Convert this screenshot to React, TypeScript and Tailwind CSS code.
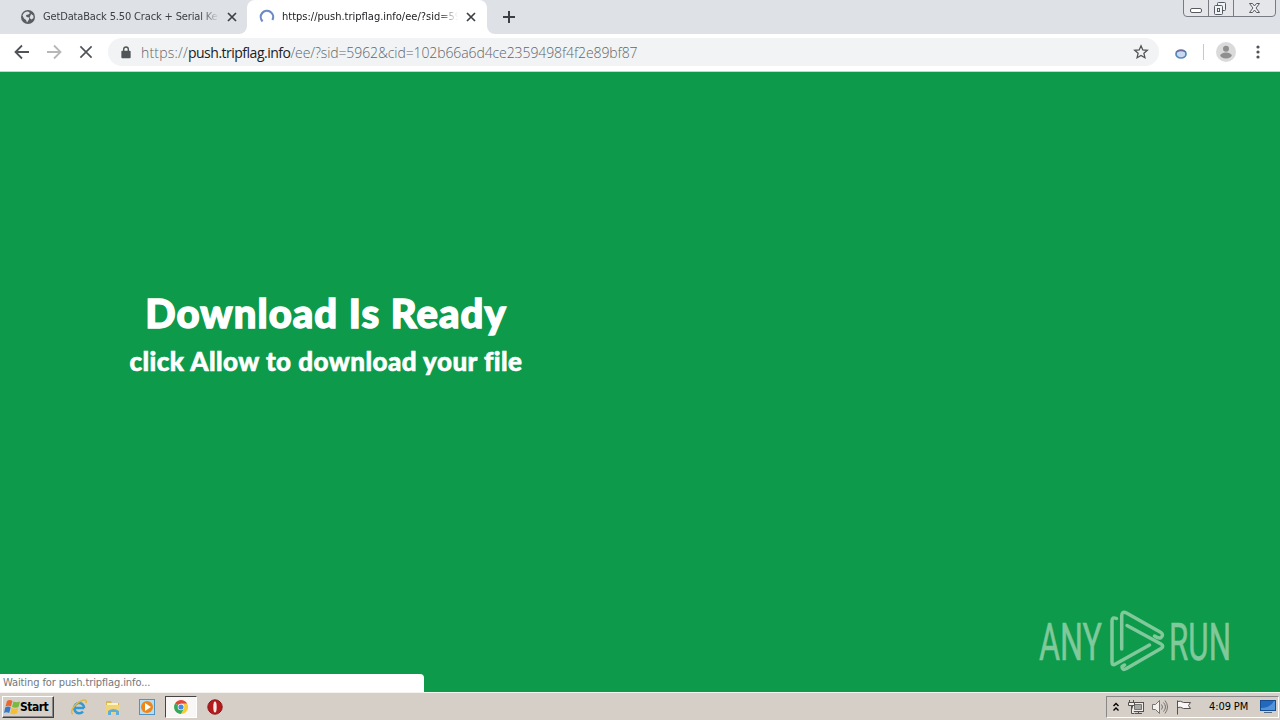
import type { ReactNode } from "react";

const uiFont = "font-['DejaVu_Sans_Condensed','DejaVu_Sans',sans-serif]";

function CloseIcon({ className }: { className: string }) {
  return (
    <svg viewBox="0 0 10 10" className={className} fill="none" stroke="currentColor" strokeWidth="1.7">
      <path d="M1 1l8 8M9 1L1 9" />
    </svg>
  );
}

function WindowButtons() {
  return (
    <svg viewBox="0 0 94 18" className="ml-auto mr-[3px] h-[18px] w-[94px]" fill="none" stroke="#777b84">
      <path d="M.5 -1V13Q.5 16.5 4 16.5H89Q92.5 16.5 92.5 13V-1" fill="#e4e6ea" />
      <path d="M25.5 0V16M50.5 0V16" />
      <rect x="7.5" y="8.5" width="11" height="4" rx="1.5" fill="white" stroke="#565a64" />
      <g fill="#f2f3f5" stroke="#565a64">
        <rect x="34.5" y="2.5" width="8" height="8" rx="1" />
        <rect x="31.5" y="5.5" width="8" height="9" rx="1" />
        <rect x="34.5" y="8.5" width="2" height="3" />
        <path d="M66.500 3.500h3l2 2.500 2-2.500h3l-3.500 4.500 3.500 4.500h-3l-2-2.500-2 2.500h-3l3.500-4.500z" />
      </g>
    </svg>
  );
}

function TabStrip() {
  return (
    <div className={`flex h-[34px] items-start bg-[#dee1e6] text-[11px] text-[#3c4043] ${uiFont}`}>
      <div className="flex h-[34px] w-[247px] items-center pl-[21px]">
        <svg viewBox="0 0 14 14" className="h-[14px] w-[14px] shrink-0">
          <circle cx="7" cy="7" r="7" fill="#5a5d61" />
          <path d="M1.500 5.500Q3 1.500 7 1.500L9 3 7.500 4.500 5 5 5.500 7 8 7.500 8 9.500 6 12.500 5 10 3 8.500z" fill="#dee1e6" />
          <path d="M10 4l2.300 1.500.2 2.500-2 1.500-2-1.500z" fill="#dee1e6" />
        </svg>
        <span className="ml-2 w-[176px] overflow-hidden whitespace-nowrap tracking-[-0.15px] [mask-image:linear-gradient(to_right,black_90%,transparent)]">
          GetDataBack 5.50 Crack + Serial Key
        </span>
        <CloseIcon className="ml-2 h-[10px] w-[10px]" />
      </div>
      <div className="relative flex h-[34px] w-[240px] items-center rounded-t-lg bg-white pl-3">
        <svg viewBox="0 0 8 8" className="absolute -left-2 bottom-0 h-2 w-2">
          <path d="M8 0v8H0a8 8 0 0 0 8-8" fill="white" />
        </svg>
        <svg viewBox="0 0 8 8" className="absolute -right-2 bottom-0 h-2 w-2">
          <path d="M0 0v8h8a8 8 0 0 1-8-8" fill="white" />
        </svg>
        <svg viewBox="0 0 16 16" className="h-4 w-4 shrink-0" fill="none" stroke="#6f89c8" strokeWidth="2.200">
          <path d="M3.600 12.400A6.200 6.200 0 1 1 13.400 11" />
        </svg>
        <span className="ml-[7px] w-[176px] overflow-hidden whitespace-nowrap text-[#202124] [mask-image:linear-gradient(to_right,black_88%,transparent)]">
          https://push.tripflag.info/ee/?sid=5962
        </span>
        <CloseIcon className="ml-2 h-[10px] w-[10px]" />
      </div>
      <svg viewBox="0 0 12 12" className="ml-4 mt-[11px] h-3 w-3" stroke="#3c4043" strokeWidth="2">
        <path d="M6 0v12M0 6h12" />
      </svg>
      <WindowButtons />
    </div>
  );
}

function Toolbar() {
  return (
    <div className="flex h-[38px] items-center border-b border-[#c9d5cc] bg-white pb-px text-[#505357]">
      <svg viewBox="0 0 16 16" className="ml-[14px] h-4 w-4" fill="none" stroke="currentColor" strokeWidth="1.8">
        <path d="M15 8H2M8 1.500L1.500 8 8 14.500" />
      </svg>
      <svg viewBox="0 0 16 16" className="ml-4 h-4 w-4" fill="none" stroke="#b5b7b9" strokeWidth="1.8">
        <path d="M1 8h13M8 1.500L14.500 8 8 14.500" />
      </svg>
      <CloseIcon className="ml-[17px] h-[14px] w-[14px] [stroke-width:1.2]" />
      <div className="ml-[15px] flex h-7 w-[1051px] items-center rounded-full bg-[#f1f3f4] pl-[13px]">
        <svg viewBox="0 0 10 14" className="h-[13px] w-[10px]" fill="none" stroke="currentColor" strokeWidth="1.500">
          <path d="M2.500 6V3.500a2.500 2.500 0 0 1 5 0V6" />
          <rect x="0" y="5.200" width="10" height="8" rx="1" fill="currentColor" stroke="none" />
        </svg>
        <span className="ml-[10px] whitespace-nowrap font-['Open_Sans','Noto_Sans',sans-serif] text-[14px] font-light tracking-[-0.1px] text-[#62666b]">
          <span className="tracking-[0.2px]">https://</span>
          <span className="font-normal tracking-[-0.5px] text-[#202124]">push.tripflag.info</span>
          /ee/?sid=5962&amp;cid=102b66a6d4ce2359498f4f2e89bf87
        </span>
        <svg viewBox="0 0 16 16" className="ml-auto mr-[10px] h-4 w-4" fill="none" stroke="currentColor" strokeWidth="1.300">
          <path d="M8 1.800l1.800 4.100 4.500.4-3.400 3 1 4.400L8 11.400l-3.900 2.300 1-4.400-3.400-3 4.500-.4z" />
        </svg>
      </div>
      <svg viewBox="0 0 12 10" className="ml-4 mt-1 h-[10px] w-3">
        <ellipse cx="6" cy="5" rx="5" ry="4" fill="#c9d9f1" stroke="#5488b8" strokeWidth="1.700" />
        <path d="M1 3Q6 0 11 3" fill="none" stroke="#706b9b" strokeWidth="1.300" />
      </svg>
      <div className="ml-4 h-4 w-px bg-[#c6c9cc]" />
      <svg viewBox="0 0 20 20" className="ml-3 h-5 w-5">
        <circle cx="10" cy="10" r="10" fill="#dadada" />
        <circle cx="10" cy="6.700" r="3" fill="#8f8f8f" />
        <ellipse cx="10" cy="13.500" rx="5.700" ry="2.900" fill="#8f8f8f" />
      </svg>
      <svg viewBox="0 0 4 14" className="ml-5 h-[14px] w-1" fill="currentColor">
        <circle cx="2" cy="2" r="1.600" />
        <circle cx="2" cy="7" r="1.600" />
        <circle cx="2" cy="12" r="1.600" />
      </svg>
    </div>
  );
}

function Watermark() {
  return (
    <svg viewBox="0 0 204 66" className="absolute left-[1035px] top-[536px] h-[66px] w-[204px]">
      <g fill="#80c99b" stroke="#80c99b" strokeWidth="0.6" fontFamily="Roboto, sans-serif" fontWeight="400" fontSize="52">
        <text x="4" y="52" textLength="63" lengthAdjust="spacingAndGlyphs">ANY</text>
        <text x="134" y="52" textLength="62" lengthAdjust="spacingAndGlyphs">RUN</text>
      </g>
      <g fill="none" stroke="#80c99b" strokeWidth="3.5" strokeLinecap="round" strokeLinejoin="round">
        <path d="M81.500 10.500Q77 8.500 77 13V54Q77 58 80.500 56L114.500 37" />
        <path d="M86.700 41V8Q86.700 2.500 91.500 5L126 24.500Q129 27 126 29.500Q124 31 119.500 28" />
        <path d="M92 17.500L126 36Q129.500 38 126 40.500L91.500 60.500Q87 63 87 58.500L89.500 57" />
      </g>
    </svg>
  );
}

function Page() {
  return (
    <main className="relative h-[620px] bg-[#0d9a4b] pt-[216px] text-white">
      <div className="w-[652px] text-center font-['Lato',sans-serif] font-black [paint-order:stroke_fill] [stroke-linejoin:round]">
        <h1 className="-mt-px h-[52px] whitespace-nowrap text-[40px] leading-[52px] tracking-[1.05px] [-webkit-text-stroke:1.4px_white]">
          Download Is Ready
        </h1>
        <p className="mt-1 h-9 whitespace-nowrap text-[26px] leading-9 tracking-[0.46px] [-webkit-text-stroke:0.6px_white]">
          click Allow to download your file
        </p>
      </div>
      <Watermark />
      <div className={`absolute bottom-0 left-0 flex h-[18px] w-[424px] items-center rounded-tr bg-white pl-[3px] pt-px text-[11px] tracking-[-0.1px] text-[#74777b] ${uiFont}`}>
        Waiting for push.tripflag.info...
      </div>
    </main>
  );
}

function TaskButton({ children, active }: { children: ReactNode; active?: boolean }) {
  return (
    <div className={active
      ? "flex h-[22px] w-[32px] items-center justify-center border border-b-white border-l-[#444] border-r-white border-t-[#444] bg-[#f8f7f5]"
      : "flex h-[22px] w-[32px] items-center justify-center"}>
      {children}
    </div>
  );
}

function Taskbar() {
  return (
    <footer className={`flex h-7 items-center border-t border-[#f5f3f0] bg-[#d5cfc8] pt-px text-[11px] text-black ${uiFont}`}>
      <div className="ml-[2px] flex h-[22px] w-[52px] items-center border border-b-[#404040] border-l-white border-r-[#404040] border-t-white pl-px shadow-[inset_-1px_-1px_#888]">
        <svg viewBox="0 0 16 16" className="h-4 w-4">
          <path d="M3 2q2.500-2 5.500 0L7 7.500q-3-1.500-5.500 0z" fill="#e86831" />
          <path d="M9.500 2.500q3 1.500 6.500 0L14.500 8q-3 1.500-6.500 0z" fill="#78b843" />
          <path d="M1.200 8.500q3-2 5.500 0L5.200 14q-3-1.500-5.200 0z" fill="#3979c5" />
          <path d="M7.700 9q3 1.500 6.500 0l-1.500 5.500q-3 1.500-6.500 0z" fill="#f6bf31" />
        </svg>
        <span className="text-[12px] font-bold tracking-[-0.5px]">Start</span>
      </div>
      <div className="ml-[9px] flex gap-[2px]">
        <TaskButton>
          <svg viewBox="0 0 18 18" className="h-[18px] w-[18px]" fill="none">
            <path d="M14.200 10H4.800M14.200 10A5 5.200 0 1 0 13 13.500" stroke="#3199d6" strokeWidth="2.500" />
            <path d="M3 16C-1 15 4 6 11 3c4-2 6-1 5 2" stroke="#e2b83e" strokeWidth="1.500" />
          </svg>
        </TaskButton>
        <TaskButton>
          <svg viewBox="0 0 18 18" className="h-[18px] w-[18px]">
            <path d="M2 3h5l1 2h7v10H2z" fill="#ddb653" />
            <path d="M3 5h11v5H3z" fill="#fff3b5" />
            <path d="M1 7h15v8H2z" fill="#f0d47c" />
            <path d="M4 17v-4q5-4 11 0v4h-3v-3H7v3z" fill="#5daedb" />
          </svg>
        </TaskButton>
        <TaskButton>
          <svg viewBox="0 0 18 18" className="h-[18px] w-[18px]">
            <rect x="1.500" y="1.500" width="15" height="15" fill="#b8ddf2" stroke="#5592c4" />
            <circle cx="9" cy="9" r="6" fill="#ed8818" />
            <path d="M7 5l6 4-6 4z" fill="white" />
          </svg>
        </TaskButton>
        <TaskButton active>
          <svg viewBox="0 0 14 14" className="h-[14px] w-[14px]">
            <path d="M7 7L1 3.500A7 7 0 0 1 13.100 3.500z" fill="#df4936" />
            <path d="M7 7L1 3.500A7 7 0 0 0 7 14l3-5z" fill="#35a756" />
            <path d="M7 3.500h6.100A7 7 0 0 1 7 14l3-5z" fill="#f8ca3b" />
            <circle cx="7" cy="7" r="3.300" fill="white" />
            <circle cx="7" cy="7" r="2.600" fill="#4688e8" />
          </svg>
        </TaskButton>
        <TaskButton>
          <svg viewBox="0 0 16 16" className="h-4 w-4">
            <circle cx="8" cy="8" r="7.200" fill="#b6191c" stroke="#87191b" />
            <ellipse cx="8" cy="8" rx="1.700" ry="5.500" fill="#f7e9e7" />
          </svg>
        </TaskButton>
      </div>
      <div className="ml-auto mr-px flex h-[22px] w-[173px] items-center border border-b-white border-l-[#888] border-r-white border-t-[#888] pl-[6px]">
        <svg viewBox="0 0 6 10" className="h-[10px] w-[6px]" fill="none" stroke="black" strokeWidth="1.400">
          <path d="M.5 4L3 1.500 5.500 4M.5 8.500L3 6l2.500 2.500" />
        </svg>
        <svg viewBox="0 0 16 16" className="ml-[9px] h-4 w-4" fill="#eee" stroke="#55524f">
          <rect x="4.500" y="3.500" width="11" height="9" />
          <path d="M6.500 5.500h7v5h-7z" fill="#aaa8a4" stroke="#77736f" />
          <path d="M7 14.500h7M10.500 12.500v2" />
          <path d="M1.500 1v2M5.500 1v2M.5 3.500h6v3h-6zM3.500 6.500v8h3" />
        </svg>
        <svg viewBox="0 0 16 16" className="ml-2 h-4 w-4" fill="#f4f2ef" stroke="#77736f">
          <path d="M.5 5.500h3l4-4v13l-4-4h-3z" />
          <path d="M9.500 5.500q2 2.500 0 5M11.500 3.500q4 4.500 0 9M13 1.500q5 6.500 0 13" fill="none" />
        </svg>
        <svg viewBox="0 0 16 16" className="ml-2 h-4 w-4" fill="#f8f7f5" stroke="#55524f">
          <path d="M1.500 15.500v-14M1.500 2.500q3-1 6 1h7l-2 3 2 3h-7q-3-2-6-1" />
        </svg>
        <span className="ml-[17px] whitespace-nowrap pt-px tracking-[-0.1px]">4:09 PM</span>
        <svg viewBox="0 0 16 14" className="ml-auto mr-[2px] h-[14px] w-4">
          <rect x=".5" y=".5" width="15" height="10" fill="#2268bd" stroke="#174d8f" />
          <path d="M1 8q9 0 13-7h1v9H1z" fill="#5293db" />
          <path d="M4 12.500h8" stroke="#506782" />
        </svg>
      </div>
    </footer>
  );
}

export default function App() {
  return (
    <div className="flex h-[720px] w-[1280px] flex-col overflow-hidden">
      <TabStrip />
      <Toolbar />
      <Page />
      <Taskbar />
    </div>
  );
}
